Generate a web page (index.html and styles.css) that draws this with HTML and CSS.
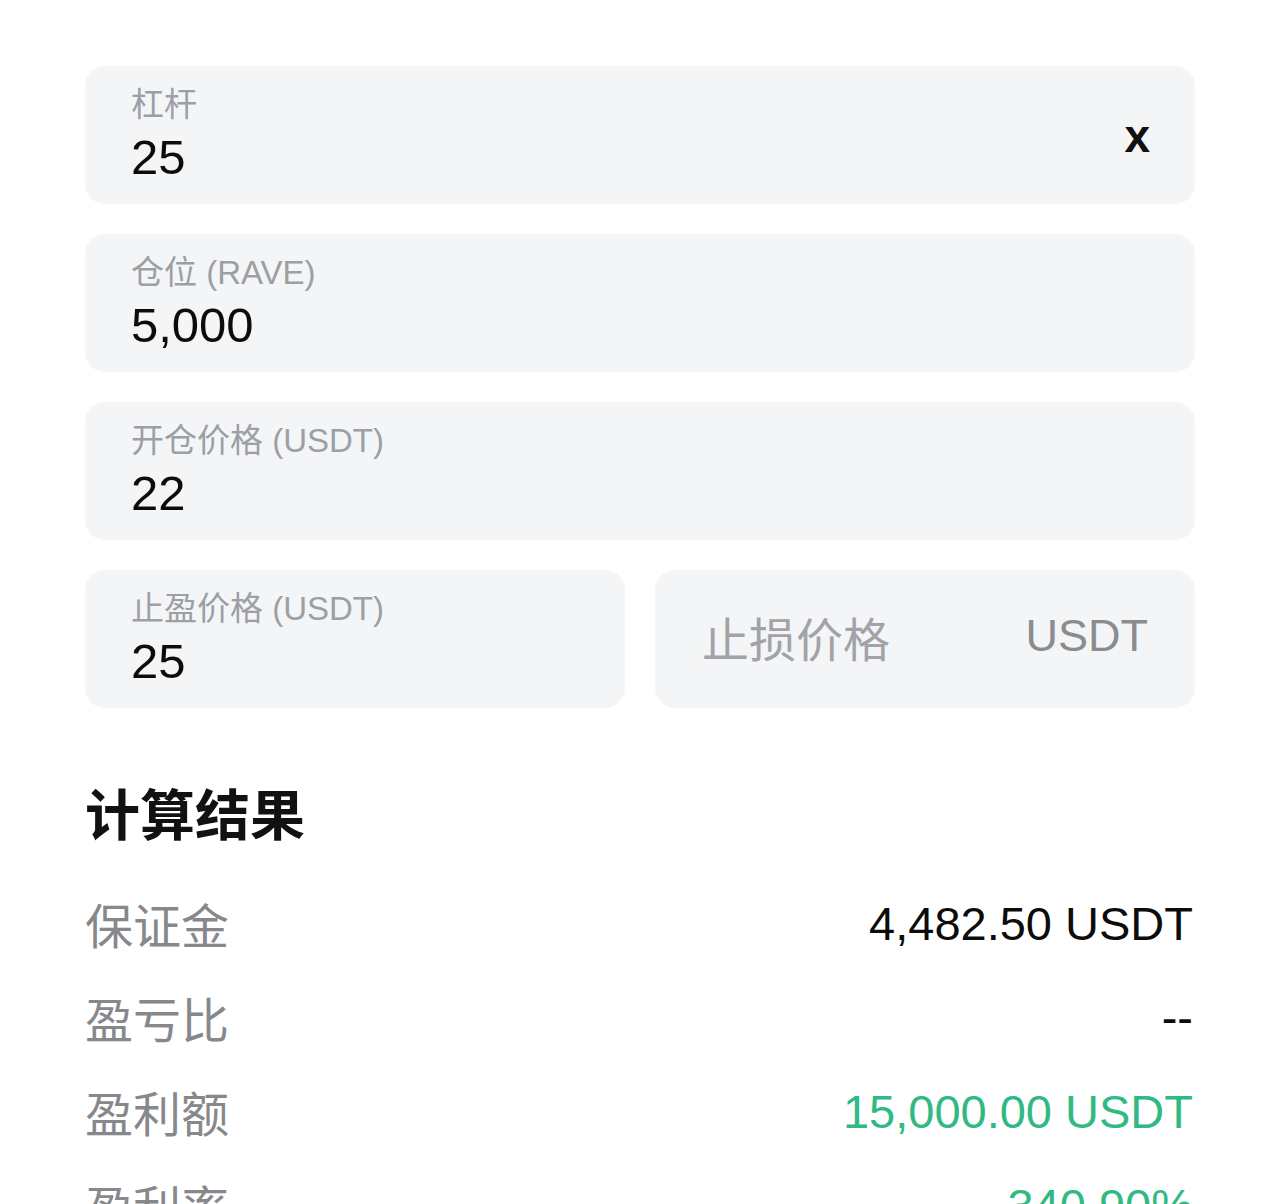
FILE: index.html
```html
<!DOCTYPE html>
<html lang="zh-CN">
<head>
	<meta charset="UTF-8">
	<meta name="viewport" content="width=device-width, initial-scale=1.0">
	<title>合约计算器</title>
	<link rel="stylesheet" href="styles.css">
</head>
<body>

 <div class="page">
 	<!-- input fields -->
 	<div class="field">
 		<div class="field-text">
 			<p class="label">杠杆</p>
 			<p class="value">25</p>
 		</div>
 		<span class="suffix">x</span>
 	</div>

 	<div class="field">
 		<div class="field-text">
 			<p class="label">仓位 (RAVE)</p>
 			<p class="value">5,000</p>
 		</div>
 	</div>

 	<div class="field">
 		<div class="field-text">
 			<p class="label">开仓价格 (USDT)</p>
 			<p class="value">22</p>
 		</div>
 	</div>

 	<div class="field-row">
 		<div class="field">
 			<div class="field-text">
 				<p class="label">止盈价格 (USDT)</p>
 				<p class="value">25</p>
 			</div>
 		</div>
 		<div class="field field-empty">
 			<span class="placeholder">止损价格</span>
 			<span class="unit">USDT</span>
 		</div>
 	</div>

 	<!-- result -->
 	<h2 class="title">计算结果</h2>

 	<ul class="result">
 		<li><span class="name">保证金</span><span class="num">4,482.50 USDT</span></li>
 		<li><span class="name">盈亏比</span><span class="num">--</span></li>
 		<li><span class="name">盈利额</span><span class="num green">15,000.00 USDT</span></li>
 		<li><span class="name">盈利率</span><span class="num green">340.90%</span></li>
 	</ul>
 </div>

</body>
</html>
```

FILE: styles.css
```css
* {
	margin: 0;
	padding: 0;
	box-sizing: border-box;
}

body {
	font-family: "Liberation Sans", "Noto Sans CJK SC", sans-serif;
	background-color: #ffffff;
	color: #111111;
	height: 1204px;
	overflow: hidden;
}

.page {
	padding: 66px 85px 0 85px;
}

/*input cards*/
.field {
	display: flex;
	align-items: center;
	justify-content: space-between;
	height: 138px;
	background-color: #f4f5f7;
	border-radius: 20px;
	padding: 0 45px 0 46px;
	margin-bottom: 30px;
}

.field .label {
	font-size: 33px;
	line-height: 40px;
	color: #9c9fa3;
}

.field .value {
	font-size: 49px;
	line-height: 56px;
	margin-top: 4px;
	color: #0c0c0c;
}

.field .suffix {
	font-size: 46px;
	font-weight: bold;
	line-height: 1;
	margin-top: 2px;
	color: #111111;
}

.field-row {
	display: grid;
	grid-template-columns: 1fr 1fr;
	gap: 30px;
}

.field-empty {
	padding: 0 47px 6px 47px;
}

.field-empty .placeholder {
	font-size: 47px;
	color: #a1a3a6;
}

.field-empty .unit {
	font-size: 45px;
	color: #8b8c8e;
}

/*result*/
.title {
	font-size: 55px;
	font-weight: 600;
	line-height: 64px;
	margin-top: 46px;
	color: #111111;
}

.result {
	list-style: none;
	margin-top: 28px;
}

.result li {
	display: flex;
	justify-content: space-between;
	align-items: center;
	height: 94px;
	padding-right: 2px;
}

.result .name {
	font-size: 48px;
	color: #86888b;
}

.result .num {
	font-size: 47px;
	color: #0c0c0c;
}

.result .green {
	color: #31b983;
}
```
